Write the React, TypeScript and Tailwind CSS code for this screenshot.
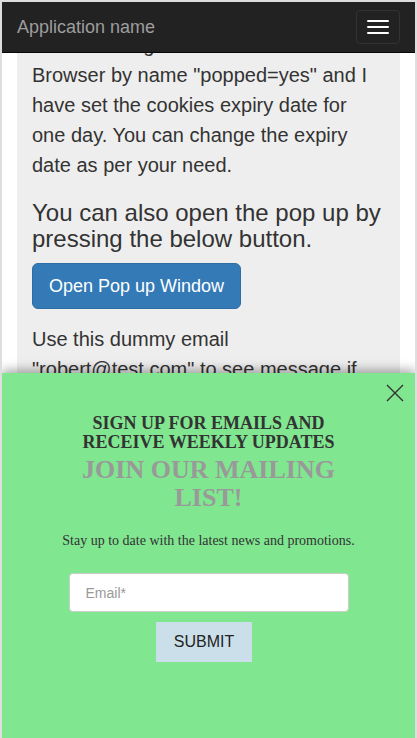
import React from "react";

export default function App() {
  return (
    <div className="relative w-[417px] h-[738px] overflow-hidden border-x-2 border-t-2 border-[#dedede] bg-white font-['Liberation_Sans',Arial,sans-serif]">
      {/* page content (scrolled) */}
      <div className="mx-[15px] bg-[#eee] px-[15px] pt-[28px] pb-[60px] text-[#333]">
        <p className="text-[20px] leading-[30px]">
          This is setting a cookie in the user's Browser by name "popped=yes" and I have set the cookies expiry date for one day. You can change the expiry date as per your need.
        </p>
        <h3 className="mt-5 mb-[10px] text-[24px] leading-[1.1]">
          You can also open the pop up by pressing the below button.
        </h3>
        <button className="h-[46px] px-[16px] rounded-[6px] border border-[#2e6da4] bg-[#337ab7] text-white text-[18px] leading-[24px]">
          Open Pop up Window
        </button>
        <p className="mt-[15px] text-[20px] leading-[30px]">
          Use this dummy email "robert@test.com" to see message if you are already subscribed to our mailing list.
        </p>
      </div>

      {/* fixed navbar */}
      <div className="absolute top-0 inset-x-0 h-[51px] bg-[#222] border-b border-[#080808] flex items-start justify-between">
        <div className="pl-[15px] pt-[15px] text-[18px] leading-[20px] text-[#9d9d9d]">Application name</div>
        <div className="mt-[8px] mr-[15px] w-[44px] h-[34px] rounded-[4px] border border-[#333] flex flex-col items-center justify-center gap-[4px]">
          <span className="block w-[22px] h-[2px] rounded-[1px] bg-white" />
          <span className="block w-[22px] h-[2px] rounded-[1px] bg-white" />
          <span className="block w-[22px] h-[2px] rounded-[1px] bg-white" />
        </div>
      </div>

      {/* popup */}
      <div className="absolute left-0 right-0 top-[371px] bottom-0 bg-[#80e690] shadow-[0_-3px_10px_rgba(0,0,0,0.35)] flex flex-col items-center text-center">
        <button className="absolute top-[10px] right-[10px] w-[20px] h-[20px] flex items-center justify-center" aria-label="close">
          <svg width="20" height="20" viewBox="0 0 20 20" fill="none" stroke="#333" strokeWidth="1.4">
            <path d="M2 2 L18 18 M18 2 L2 18" />
          </svg>
        </button>
        <div className="mt-[41px] w-[280px] font-['Liberation_Serif','Times_New_Roman',serif] font-bold text-[18px] leading-[19px] text-[#333]">
          SIGN UP FOR EMAILS AND RECEIVE WEEKLY UPDATES
        </div>
        <div className="mt-[4px] w-[280px] font-['Liberation_Serif','Times_New_Roman',serif] font-bold text-[26px] leading-[28px] text-[#999]">
          JOIN OUR MAILING LIST!
        </div>
        <div className="mt-[19px] font-['Liberation_Serif','Times_New_Roman',serif] text-[14px] leading-[20px] text-[#333]">
          Stay up to date with the latest news and promotions.
        </div>
        <input
          type="text"
          placeholder="Email*"
          className="mt-[22px] w-[280px] h-[39px] rounded-[4px] border border-[#ccc] bg-white px-[16px] text-[14px] text-[#333] placeholder:text-[#999] outline-none"
        />
        <button className="mt-[10px] mr-[9px] w-[96px] h-[40px] bg-[#cbdfea] text-[16px] text-[#222]">
          SUBMIT
        </button>
      </div>
    </div>
  );
}
